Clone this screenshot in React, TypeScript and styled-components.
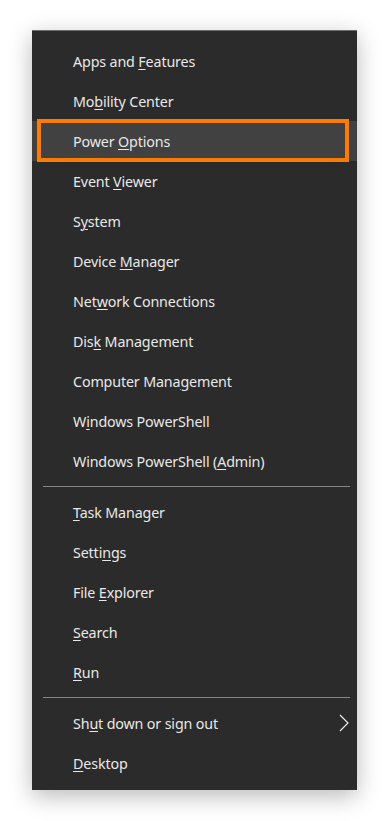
import styled, { createGlobalStyle } from "styled-components";

const Global = createGlobalStyle`
    html, body {
        margin: 0;
        padding: 0;
        background: #ffffff;
    }
    body {
        font-family: "Noto Sans", "Open Sans", sans-serif;
    }
`;

type Item = { label: string; key: number; active?: boolean; arrow?: boolean };

const groups: Item[][] = [
    [
        { label: "Apps and Features", key: 9 },
        { label: "Mobility Center", key: 2 },
        { label: "Power Options", key: 6, active: true },
        { label: "Event Viewer", key: 6 },
        { label: "System", key: 1 },
        { label: "Device Manager", key: 7 },
        { label: "Network Connections", key: 3 },
        { label: "Disk Management", key: 3 },
        { label: "Computer Management", key: 13 },
        { label: "Windows PowerShell", key: 1 },
        { label: "Windows PowerShell (Admin)", key: 20 },
    ],
    [
        { label: "Task Manager", key: 0 },
        { label: "Settings", key: 5 },
        { label: "File Explorer", key: 5 },
        { label: "Search", key: 0 },
        { label: "Run", key: 0 },
    ],
    [
        { label: "Shut down or sign out", key: 2, arrow: true },
        { label: "Desktop", key: 0 },
    ],
];

function Label({ text, at }: { text: string; at: number }) {
    return (
        <S.Text>
            {text.slice(0, at)}
            <S.Key>{text[at]}</S.Key>
            {text.slice(at + 1)}
        </S.Text>
    );
}

function App() {
    return (
        <>
            <Global />
            <S.Page>
                <S.Menu>
                    {groups.map((group, gi) => (
                        <S.Group key={gi}>
                            {gi > 0 && <S.Separator />}
                            {group.map((item) => (
                                <S.Row key={item.label} $active={item.active}>
                                    <Label text={item.label} at={item.key} />
                                    {item.arrow && (
                                        <S.Arrow width="10" height="18" viewBox="0 0 10 18">
                                            <path d="M1 1 L9 9 L1 17" fill="none" stroke="#f2f2f2" strokeWidth="1.1" />
                                        </S.Arrow>
                                    )}
                                    {item.active && <S.Marker />}
                                </S.Row>
                            ))}
                        </S.Group>
                    ))}
                </S.Menu>
            </S.Page>
        </>
    );
}

const S = {
    Page: styled.div`
        padding: 30px 0 32px 32px;
    `,

    Menu: styled.div`
        width: 325px;
        box-sizing: border-box;
        background: #2b2b2b;
        border-top: 1px solid #6e6e6e;
        padding: 10px 0 7px 0;
        box-shadow: 0 6px 22px rgba(0, 0, 0, 0.28);
    `,

    Group: styled.div`
        display: flex;
        flex-direction: column;
    `,

    Separator: styled.div`
        height: 1px;
        background: #858585;
        margin: 5px 7px 5px 11px;
    `,

    Row: styled.div<{ $active?: boolean }>`
        position: relative;
        height: 40px;
        display: flex;
        align-items: center;
        justify-content: space-between;
        padding: 0 8px 0 41px;
        background: ${(p) => (p.$active ? "#414141" : "transparent")};
    `,

    Text: styled.span`
        color: #e8e8e8;
        font-size: 14.3px;
        letter-spacing: -0.15px;
        white-space: nowrap;
    `,

    Key: styled.span`
        text-decoration: underline;
        text-underline-offset: 2px;
        text-decoration-thickness: 1px;
    `,

    Arrow: styled.svg`
        display: block;
    `,

    Marker: styled.div`
        position: absolute;
        left: 5px;
        right: 8px;
        top: -2px;
        bottom: -1px;
        border: 4px solid #ff7b00;
        pointer-events: none;
    `,
};

export default App;
